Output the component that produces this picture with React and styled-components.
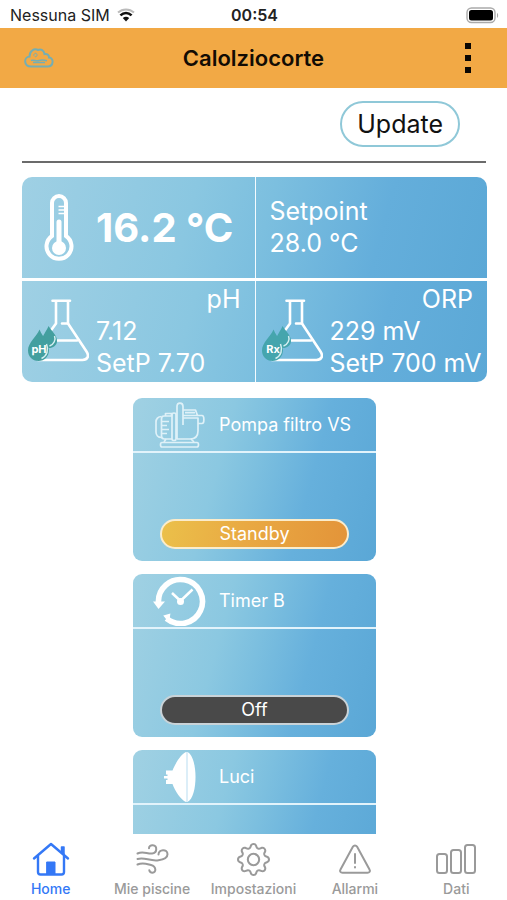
import React from "react";
import styled, { createGlobalStyle, css } from "styled-components";
import { BsGear } from "react-icons/bs";

const GlobalStyle = createGlobalStyle`
  *, *::before, *::after { box-sizing: border-box; }
  body { margin: 0; background: #fff; }
  body, button { font-family: Inter, "Liberation Sans", sans-serif; }
`;

const Screen = styled.div`
  display: flex;
  flex-direction: column;
  height: 100vh;
  overflow: hidden;
  color: #111;
`;

const StatusBar = styled.div`
  flex: none;
  display: grid;
  grid-template-columns: 1fr auto 1fr;
  align-items: center;
  height: 28px;
  padding: 2px 8px 0 10px;
  font-size: 16px;
  line-height: 24px;
  color: #222;
`;

const Carrier = styled.div`
  display: flex;
  align-items: center;
  gap: 7px;
`;

const Clock = styled.time`
  font-weight: 600;
`;

const BatterySlot = styled.div`
  display: flex;
  justify-content: flex-end;
`;

const Header = styled.header`
  flex: none;
  display: grid;
  grid-template-columns: 1fr auto 1fr;
  align-items: center;
  height: 60px;
  padding: 0 24px;
  background: #f2a945;
`;

const Title = styled.h1`
  margin: 0;
  font-size: 22px;
  line-height: 28px;
  font-weight: 600;
  color: #120c04;
`;

const MenuButton = styled.button`
  justify-self: end;
  display: flex;
  padding: 4px 12px;
  border: 0;
  background: none;
  cursor: pointer;
`;

const Content = styled.main`
  flex: 1;
  min-height: 0;
  overflow: hidden;
  padding: 13px 20px 0 22px;
`;

const Toolbar = styled.div`
  display: flex;
  justify-content: flex-end;
  margin-right: 1px;
  padding: 0 26px 14px 0;
  border-bottom: 2px solid #6b6b6b;
`;

const UpdateButton = styled.button`
  height: 46px;
  padding: 0 15px;
  border: 2px solid #8fc8d8;
  border-radius: 23px;
  background: #fff;
  color: #111;
  font-size: 25px;
  line-height: 32px;
  cursor: pointer;
`;

const Readings = styled.section`
  display: grid;
  gap: 3px;
  margin-top: 14px;
  border-radius: 10px;
  overflow: hidden;
`;

const ReadingRow = styled.div`
  display: grid;
  grid-template-columns: 1fr 1fr;
  height: 101px;
  background: linear-gradient(105deg, #9fd0e4 0%, #8ac7e1 36%, #7cbfdf 52%, #64aedb 76%, #5ba8d6 100%);
  color: #fff;
  font-size: 25px;
  line-height: 32px;
  white-space: nowrap;
`;

const Cell = styled.div`
  min-width: 0;
  & + & {
    border-left: 1px solid #f4fbff;
  }
`;

const TemperatureCell = styled(Cell)`
  display: flex;
  align-items: center;
  gap: 22px;
  padding-left: 22px;
`;

const Temperature = styled.strong`
  font-size: 40px;
  line-height: 48px;
  font-weight: 700;
`;

const SetpointCell = styled(Cell)`
  padding: 18px 14px;
`;

const ProbeCell = styled(Cell)`
  display: grid;
  grid-template-columns: 61px 1fr;
  grid-template-rows: 32px 1fr;
  column-gap: 7px;
  padding: 2px 0 0 6px;
`;

const ProbeIcon = styled.div`
  grid-row: 1 / 3;
  padding-top: 16px;
`;

const ProbeName = styled.div`
  padding-right: 14px;
  text-align: right;
`;

const Devices = styled.section`
  display: flex;
  flex-direction: column;
  align-items: center;
  gap: 13px;
  margin-top: 16px;
`;

const Device = styled.article`
  display: flex;
  flex-direction: column;
  width: 243px;
  height: 163px;
  border-radius: 9px;
  background: linear-gradient(105deg, #a0d1e3 0%, #8bc8e1 36%, #7cbfdf 50%, #66b0dc 70%, #5aa7d6 100%);
  color: #fff;
`;

const DeviceHead = styled.header`
  display: flex;
  align-items: center;
  gap: 12px;
  height: 55px;
  padding-left: 20px;
  border-bottom: 2px solid #e2f3fb;
`;

const DeviceIcon = styled.div`
  display: flex;
  justify-content: center;
  width: 54px;
`;

const DeviceName = styled.h2`
  margin: 0;
  font-size: 18px;
  line-height: 24px;
  font-weight: 400;
`;

const tones = {
  standby: css`
    border-color: #fbeccb;
    background: linear-gradient(100deg, #ebc04a 0%, #e9a943 45%, #e39439 100%);
  `,
  off: css`
    border-color: #c9d3d8;
    background: #494949;
  `,
};

const StateButton = styled.button`
  height: 30px;
  margin: auto 27px 12px;
  padding: 0;
  border: 2px solid;
  border-radius: 15px;
  color: #fff;
  font-size: 18px;
  line-height: 24px;
  cursor: pointer;
  ${({ $tone }) => tones[$tone]}
`;

const TabBar = styled.nav`
  flex: none;
  display: grid;
  grid-template-columns: repeat(5, 1fr);
  height: 66px;
  background: #fff;
`;

const Tab = styled.a`
  display: flex;
  flex-direction: column;
  align-items: center;
  padding-top: 7px;
  color: ${({ $active }) => ($active ? "#3478f6" : "#9a9a9a")};
  font-size: 14px;
  line-height: 16px;
  font-weight: 500;
  text-decoration: none;
  white-space: nowrap;
`;

const TabIcon = styled.span`
  display: flex;
  align-items: center;
  height: 36px;
  margin-bottom: 4px;
`;

const WifiIcon = () => (
  <svg width="18" height="14" viewBox="0 0 18 14" fill="none" aria-hidden="true">
    <path d="M1 4.600C5.600.3 12.400.3 17 4.600" stroke="#bbb" strokeWidth="2" />
    <path d="M3.400 7.400c3.400-3 7.800-3 11.200 0" stroke="#111" strokeWidth="2.600" />
    <path d="M5.800 10c2-1.600 4.400-1.600 6.400 0L9 13.500z" fill="#111" />
  </svg>
);

const BatteryIcon = () => (
  <svg width="33" height="17" viewBox="0 0 33 17" aria-hidden="true">
    <rect x="1" y="1" width="28" height="14.500" rx="4.500" fill="#fff" stroke="#aaa" strokeWidth="1.400" />
    <rect x="3" y="3" width="24" height="10.500" rx="2.500" fill="#000" />
    <path d="M31 6c1.500.6 1.500 4.200 0 4.800z" fill="#aaa" />
  </svg>
);

const CloudIcon = () => (
  <svg width="30" height="20" viewBox="0 0 30 20" fill="none" stroke="#75aeb4" aria-hidden="true">
    <path d="M7 18.500C-.5 18.500-.5 9 5.500 8.500 5.500 3 10 0 14 2c3-1.500 6 .5 6.500 4 3-.5 4.500 1.500 4.500 3.500 5 .5 5 9-1.500 9z" strokeWidth="2" />
    <path d="M9.500 7.500c.5-2.500 3-3 3.500-1s-1.500 3-2.500 1.500" strokeWidth="1" />
    <path d="M7 12.500c3-1.200 5 .8 8 0s5-.5 8 .3M9 14.500h12" strokeWidth="1.500" />
  </svg>
);

const DotsIcon = () => (
  <svg width="6" height="30" viewBox="0 0 6 30" aria-hidden="true">
    <path d="M0 0h6v6H0zM0 12h6v6H0zM0 24h6v6H0z" fill="#0b0703" />
  </svg>
);

const ThermometerIcon = () => (
  <svg width="30" height="68" viewBox="0 0 30 68" fill="none" stroke="#fff" aria-hidden="true">
    <path d="M8 42V9a7 7 0 0 1 14 0v33a12.500 12.500 0 1 1-14 0z" strokeWidth="4" />
    <path d="M15 28v26" strokeWidth="5" strokeLinecap="round" />
    <circle cx="15" cy="54" r="7" fill="#fff" stroke="none" />
    <path d="M14.500 12.500H21M14.500 16H21M14.500 19.500H21" strokeWidth="1.500" />
  </svg>
);

const FlaskIcon = ({ label, fill }) => (
  <svg width="61" height="64" viewBox="0 0 61 64" fill="none" aria-hidden="true">
    <g stroke="#fff" strokeWidth="2.600" strokeLinecap="round" strokeLinejoin="round">
      <path d="M24.500 1.700H42M28 2v22.500L22.500 32M40 2v22.500l18.500 28c3 4.500 1 8.500-4 8.500H10" />
      <path d="M34 24.500h6M29 41.500h20" />
    </g>
    <path d="M20.500 27c3 5 9 9.500 8.500 15.500-.4 4-4 6.500-8 6.500-4.500 0-7-3-7-7C14 36 19 32 20.500 27z" fill={fill} />
    <path d="M26.500 37c1.500 3.500-.5 8.500-5 10" stroke="#d5eff2" strokeWidth="1.500" />
    <path d="M11.500 30.500C14.500 38 21 43.500 21 51c0 6.500-4.500 11-10.500 11S0 57.500 0 51.500C0 43.500 8.500 38 11.500 30.500z" fill={fill} />
    <path d="M18.500 45c2.500 6 .5 12-5 14.500" stroke="#d5eff2" strokeWidth="1.500" />
    <text x="11" y="53.500" textAnchor="middle" fontFamily="Inter, sans-serif" fontSize="11" fontWeight="700" fill="#fff">
      {label}
    </text>
  </svg>
);

const PumpIcon = () => (
  <svg width="50" height="46" viewBox="0 0 50 46" fill="none" stroke="#dff1f8" strokeWidth="1.700" strokeLinejoin="round" aria-hidden="true">
    <path d="M17 14H9c-2 0-2.500 1.500-2.500 3v17c0 2 1 3 3 3H17" />
    <path d="M6.500 14.500C3 14.500 1 17 1 20v10c0 3 2 5.500 5.500 5.500" />
    <path d="M7 19.500h7M7 23.500h5M7 27.500h7M7 31.500h5" />
    <path d="M10.500 14v-2.500h6V14" />
    <path d="M17 12.500c0-2 4-2 4 0v24.500c0 2-4 2-4 0z" />
    <path d="M22 37V4.500c0-4.500 6-4.500 6 0V23" />
    <path d="M28 8h12.500l2 5.500H28M30 10.700h10" />
    <path d="M28 16h15v13c0 5-3 8-8 8H22" />
    <path d="M42.500 13.500h4.500c2.500 0 2.500 8 0 8h-4" />
    <path d="M11 37l-2 3M36 37l3 3" />
    <path d="M7 40.500h35c2 0 2 4.500 0 4.500H7c-2 0-2-4.500 0-4.500z" />
  </svg>
);

const TimerIcon = () => (
  <svg width="54" height="50" viewBox="0 0 54 50" fill="none" stroke="#fff" aria-hidden="true">
    <path d="M5.500 27a22 22 0 1 1 8 15.500" strokeWidth="5.600" />
    <path d="M0 25.500h12L5.500 33z" fill="#fff" stroke="none" />
    <path d="M11.500 40l5-1.500-1 6.500z" fill="#fff" strokeWidth="1.500" />
    <path d="M19 17l8.500 8L39.500 13.500" strokeWidth="2.500" />
    <circle cx="27.500" cy="25.500" r="3.500" fill="#fff" stroke="none" />
  </svg>
);

const LampIcon = () => (
  <svg width="32" height="50" viewBox="0 0 32 50" fill="#fff" aria-hidden="true">
    <path d="M22 0C17 2 11 12 8.500 18.500H2v4h1.500V24H0v2.500h3.500V28H2v4h6.500C11 39 17 48 22 50z" />
    <path d="M23.500 0C29 3 31.500 14 31.500 25S29 47 23.500 50z" />
    <path d="M22 0h2v50h-2z" fill="#dceef8" />
  </svg>
);

const HomeIcon = () => (
  <svg width="38" height="34" viewBox="0 0 38 34" fill="none" stroke="currentColor" strokeWidth="2.400" strokeLinecap="round" strokeLinejoin="round" aria-hidden="true">
    <path d="M2 16.500L19 2l17 14.500" />
    <path d="M6 14v16c0 1.500 1 2.500 2.500 2.500h21c1.500 0 2.500-1 2.500-2.500V14" />
    <path d="M29.500 10.500V5H32v7.500z" fill="currentColor" strokeWidth="1.500" />
    <path d="M15 20h8v12h-8z" fill="currentColor" strokeWidth="1" />
  </svg>
);

const WindIcon = () => (
  <svg width="33" height="30" viewBox="0 0 33 30" fill="none" stroke="currentColor" strokeWidth="2" strokeLinecap="round" aria-hidden="true">
    <path d="M1.500 9.500C7 6.500 11 10 16 9.500c5.500-.6 5.500-7.800.8-8.200-2.300-.2-3.800 1.200-3.800 3" />
    <path d="M1.500 15c7-2.500 12 2.500 21 1.200 5-.7 9-2.700 9-6 0-5.700-9-5.200-9 .3" />
    <path d="M1.500 20.500C7 18 11 20 15 21c5.500 1.500 5.500 7.500 1.500 7.700-2 0-3-1-3.200-2.500" />
  </svg>
);

const AlertIcon = () => (
  <svg width="32" height="30" viewBox="0 0 32 30" fill="none" stroke="currentColor" strokeWidth="2" strokeLinecap="round" strokeLinejoin="round" aria-hidden="true">
    <path d="M14 2.500c1-1.500 3-1.500 4 0l12.500 23c1 1.700 0 3.300-2 3.300h-25c-2 0-3-1.600-2-3.300z" />
    <path d="M16 10v9M16 23v.5" />
  </svg>
);

const BarsIcon = () => (
  <svg width="40" height="30" viewBox="0 0 40 30" fill="none" stroke="currentColor" strokeWidth="2" aria-hidden="true">
    <rect x="1" y="10" width="10" height="19" rx="2.500" />
    <rect x="15" y="6" width="10" height="23" rx="2.500" />
    <rect x="29" y="1" width="10" height="28" rx="2.500" />
  </svg>
);

const probes = [
  { name: "pH", value: "7.12", target: "SetP 7.70", tag: "pH", fill: "#439f9f" },
  { name: "ORP", value: "229 mV", target: "SetP 700 mV", tag: "Rx", fill: "#45a5ad" },
];

const devices = [
  { name: "Pompa filtro VS", icon: PumpIcon, state: "Standby", tone: "standby" },
  { name: "Timer B", icon: TimerIcon, state: "Off", tone: "off" },
  { name: "Luci", icon: LampIcon },
];

const tabs = [
  { label: "Home", icon: <HomeIcon />, active: true },
  { label: "Mie piscine", icon: <WindIcon /> },
  { label: "Impostazioni", icon: <BsGear size={33} /> },
  { label: "Allarmi", icon: <AlertIcon /> },
  { label: "Dati", icon: <BarsIcon /> },
];

export default function App() {
  return (
    <Screen>
      <GlobalStyle />
      <StatusBar>
        <Carrier>
          Nessuna SIM <WifiIcon />
        </Carrier>
        <Clock>00:54</Clock>
        <BatterySlot>
          <BatteryIcon />
        </BatterySlot>
      </StatusBar>
      <Header>
        <CloudIcon />
        <Title>Calolziocorte</Title>
        <MenuButton type="button" aria-label="Menu">
          <DotsIcon />
        </MenuButton>
      </Header>
      <Content>
        <Toolbar>
          <UpdateButton type="button">Update</UpdateButton>
        </Toolbar>
        <Readings>
          <ReadingRow>
            <TemperatureCell>
              <ThermometerIcon />
              <Temperature>16.2 °C</Temperature>
            </TemperatureCell>
            <SetpointCell>
              <div>Setpoint</div>
              <div>28.0 °C</div>
            </SetpointCell>
          </ReadingRow>
          <ReadingRow>
            {probes.map((probe) => (
              <ProbeCell key={probe.name}>
                <ProbeIcon>
                  <FlaskIcon label={probe.tag} fill={probe.fill} />
                </ProbeIcon>
                <ProbeName>{probe.name}</ProbeName>
                <div>
                  <div>{probe.value}</div>
                  <div>{probe.target}</div>
                </div>
              </ProbeCell>
            ))}
          </ReadingRow>
        </Readings>
        <Devices>
          {devices.map(({ name, icon: Icon, state, tone }) => (
            <Device key={name}>
              <DeviceHead>
                <DeviceIcon>
                  <Icon />
                </DeviceIcon>
                <DeviceName>{name}</DeviceName>
              </DeviceHead>
              {state && (
                <StateButton type="button" $tone={tone}>
                  {state}
                </StateButton>
              )}
            </Device>
          ))}
        </Devices>
      </Content>
      <TabBar>
        {tabs.map(({ label, icon, active }) => (
          <Tab key={label} href="#" $active={active} aria-current={active ? "page" : undefined}>
            <TabIcon>{icon}</TabIcon>
            {label}
          </Tab>
        ))}
      </TabBar>
    </Screen>
  );
}
